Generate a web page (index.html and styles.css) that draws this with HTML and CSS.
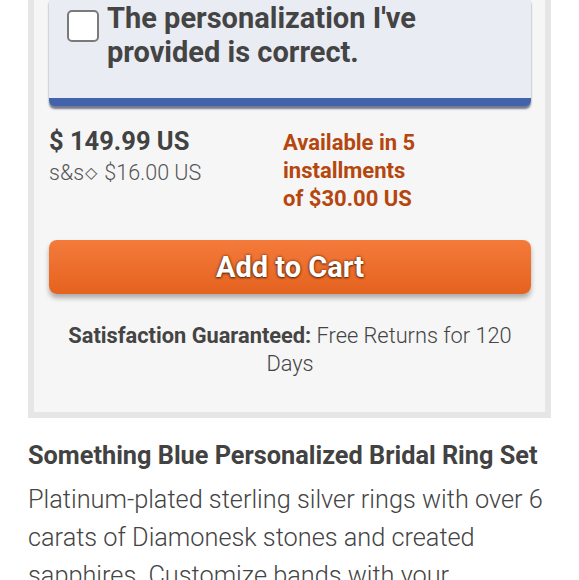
FILE: index.html
```html
<!DOCTYPE html>
<html>
<head>
<meta charset="utf-8">
<link rel="stylesheet" href="styles.css">
</head>
<body>
<div class="card">
  <div class="confirm">
    <label class="confirm-row">
      <span class="checkbox"></span>
      <span class="confirm-text">The personalization I've provided is correct.</span>
    </label>
  </div>
  <div class="pricing">
    <div class="price-col">
      <div class="price">$ 149.99 US</div>
      <div class="shipping">s&amp;s<span class="diamond">◇</span> $16.00 US</div>
    </div>
    <div class="install">Available in 5 installments of $30.00 US</div>
  </div>
  <button class="cart-btn">Add to Cart</button>
  <p class="guarantee"><b>Satisfaction Guaranteed:</b> Free Returns for 120 Days</p>
</div>
<div class="details">
  <h2 class="title">Something Blue Personalized Bridal Ring Set</h2>
  <p class="desc">Platinum-plated sterling silver rings with over 6 carats of Diamonesk stones and created sapphires. Customize bands with your</p>
</div>
</body>
</html>
```

FILE: styles.css
```css
* { box-sizing: border-box; }
html, body {
  margin: 0;
  padding: 0;
  background: #ffffff;
  font-family: Roboto, "Liberation Sans", sans-serif;
  color: #424242;
  overflow: hidden;
}
.card {
  margin-left: 28px;
  width: 523px;
  background: #f6f6f6;
  border: 6px solid #e6e6e6;
  border-top: none;
  padding: 0 14px 0 15px;
}
.confirm {
  background: #e9ecf2;
  border-bottom: 8px solid #4262ac;
  border-radius: 0 0 6px 6px;
  box-shadow: 0 3px 2px rgba(30, 40, 70, 0.6);
  padding: 1px 20px 29px 18px;
}
.confirm-row {
  display: flex;
  align-items: flex-start;
  gap: 8px;
}
.checkbox {
  flex: none;
  width: 32px;
  height: 32px;
  margin-top: 9px;
  background: #fff;
  border: 2px solid #7a7a7a;
  border-radius: 5px;
}
.confirm-text {
  font-size: 29px;
  font-weight: 700;
  line-height: 34px;
  color: #444;
}
.pricing {
  display: flex;
  padding-top: 19px;
}
.price-col {
  width: 234px;
}
.price {
  font-size: 25.5px;
  font-weight: 700;
  line-height: 32px;
  color: #424242;
}
.shipping {
  font-size: 21.5px;
  font-weight: 300;
  line-height: 32px;
  color: #555;
}
.diamond {
  display: inline-block;
  margin: 0 2px 0 1px;
  font-size: 16px;
  vertical-align: 2px;
}
.install {
  width: 138px;
  padding-top: 4px;
  font-size: 22px;
  font-weight: 700;
  line-height: 28px;
  color: #b5470e;
}
.cart-btn {
  display: block;
  width: 100%;
  height: 54px;
  margin-top: 27px;
  border: none;
  border-radius: 8px;
  background: linear-gradient(#f47b3b, #e5621f);
  box-shadow: 0 4px 5px rgba(0, 0, 0, 0.3);
  font-family: Roboto, "Liberation Sans", sans-serif;
  font-size: 29px;
  font-weight: 700;
  color: #fff;
  text-shadow: 0 0 3px rgba(80, 30, 0, 0.9), 0 1px 2px rgba(80, 30, 0, 0.8);
}
.guarantee {
  margin: 28px 10px 0;
  padding-bottom: 34px;
  text-align: center;
  font-size: 21.8px;
  font-weight: 300;
  line-height: 28px;
  color: #444;
}
.guarantee b { font-weight: 700; }
.details {
  padding: 0 28px;
}
.title {
  margin: 23px 0 0;
  font-size: 25.3px;
  font-weight: 700;
  line-height: 30px;
  color: #424242;
}
.desc {
  margin: 10px 0 0;
  font-size: 25.3px;
  font-weight: 300;
  line-height: 38px;
  color: #444;
}
```
